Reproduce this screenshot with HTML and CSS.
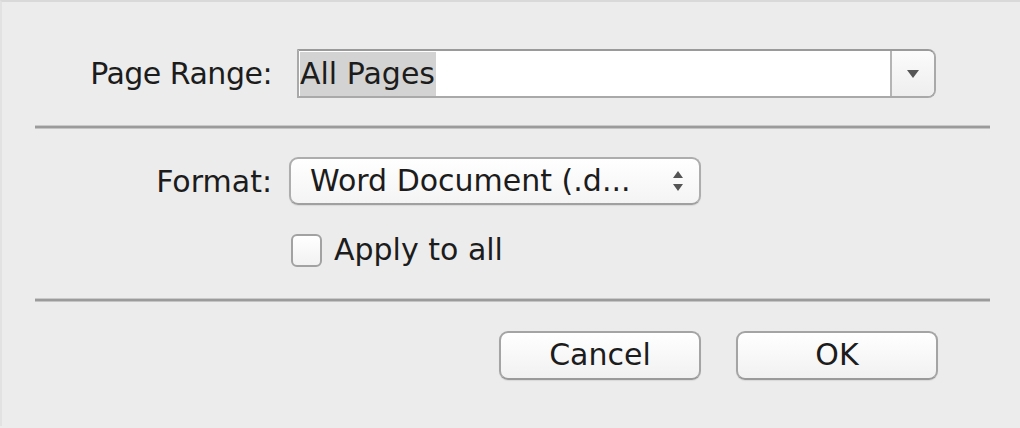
FILE: index.html
```html
<!DOCTYPE html>
<html>
<head>
<meta charset="utf-8">
<link rel="stylesheet" href="styles.css">
</head>
<body>
<div class="dialog">
  <div class="row row-range">
    <div class="label">Page Range:</div>
    <div class="combo">
      <div class="combo-field"><span class="sel">All Pages</span></div>
      <div class="combo-btn"><svg width="14" height="10" viewBox="0 0 14 10"><path d="M1 1 H13 L7 9 Z" fill="#555"/></svg></div>
    </div>
  </div>
  <div class="sep sep-1"></div>
  <div class="row row-format">
    <div class="label">Format:</div>
    <div class="popup">
      <span class="popup-text">Word Document (.d...</span>
      <svg class="updown" width="12" height="22" viewBox="0 0 12 22"><path d="M1 8 L6 1 L11 8 Z M1 14 L6 21 L11 14 Z" fill="#555"/></svg>
    </div>
  </div>
  <div class="row row-check">
    <div class="label"></div>
    <label class="check"><span class="box"></span><span class="check-text">Apply to all</span></label>
  </div>
  <div class="sep sep-2"></div>
  <div class="buttons">
    <div class="btn">Cancel</div>
    <div class="btn">OK</div>
  </div>
</div>
</body>
</html>
```

FILE: styles.css
```css
html, body {
  margin: 0;
  padding: 0;
}
body {
  width: 1020px;
  height: 428px;
  background: #ececec;
  font-family: "DejaVu Sans", Verdana, sans-serif;
  color: #1c1c1c;
  overflow: hidden;
}
.dialog {
  height: 426px;
  border-top: 2px solid #d9d9d9;
  border-left: 2px solid #e2e2e2;
  box-sizing: border-box;
  padding-top: 47px;
}
.row {
  display: flex;
  align-items: center;
}
.label {
  width: 270px;
  text-align: right;
  font-size: 30px;
  flex: none;
}
.row-range .label {
  letter-spacing: -0.5px;
}
.combo {
  margin-left: 25px;
  width: 639px;
  height: 49px;
  display: flex;
  box-sizing: border-box;
  border: 2px solid #a9a9a9;
  border-top-color: #9a9a9a;
  border-radius: 0 8px 8px 0;
  background: #fff;
  overflow: hidden;
}
.combo-field {
  flex: 1;
  padding-left: 1px;
  padding-top: 1px;
  display: flex;
}
.sel {
  background: #d3d3d3;
  font-size: 30px;
  line-height: 43px;
  padding-right: 1px;
}
.combo-btn {
  width: 42px;
  border-left: 2px solid #b4b4b4;
  background: linear-gradient(#fbfbfb, #eeeeee);
  display: flex;
  align-items: center;
  justify-content: center;
}
.sep {
  margin-left: 33px;
  width: 955px;
  height: 2px;
  background: #9b9b9b;
  box-shadow: 0 -1px 0 #c9c9c9, 0 1px 0 #c4c4c4;
}
.sep-1 {
  margin-top: 28px;
}
.row-format {
  margin-top: 29px;
}
.popup {
  margin-left: 17px;
  width: 412px;
  height: 48px;
  box-sizing: border-box;
  border: 2px solid #adadad;
  border-bottom-color: #a0a0a0;
  border-radius: 9px;
  background: linear-gradient(#ffffff, #f4f4f4);
  display: flex;
  align-items: center;
  padding-left: 19px;
  box-shadow: 0 1px 1px rgba(0,0,0,0.08);
}
.popup-text {
  font-size: 30px;
  flex: 1;
  padding-bottom: 2px;
}
.updown {
  margin-right: 15px;
}
.row-check {
  margin-top: 27px;
}
.check {
  margin-left: 19px;
  display: flex;
  align-items: center;
}
.box {
  width: 31px;
  height: 33px;
  box-sizing: border-box;
  border: 2px solid #a2a2a2;
  border-radius: 6px;
  background: linear-gradient(#ffffff, #f2f2f2);
}
.check-text {
  font-size: 30px;
  margin-left: 12px;
  padding-bottom: 2px;
}
.sep-2 {
  margin-top: 30px;
}
.buttons {
  margin-top: 30px;
  display: flex;
  padding-left: 497px;
  gap: 35px;
}
.btn {
  width: 202px;
  height: 49px;
  box-sizing: border-box;
  border: 2px solid #a4a4a4;
  border-bottom-color: #9a9a9a;
  border-radius: 9px;
  background: linear-gradient(#ffffff, #f1f1f1);
  font-size: 30px;
  text-align: center;
  line-height: 43px;
  box-shadow: 0 1px 1px rgba(0,0,0,0.08);
}
```
